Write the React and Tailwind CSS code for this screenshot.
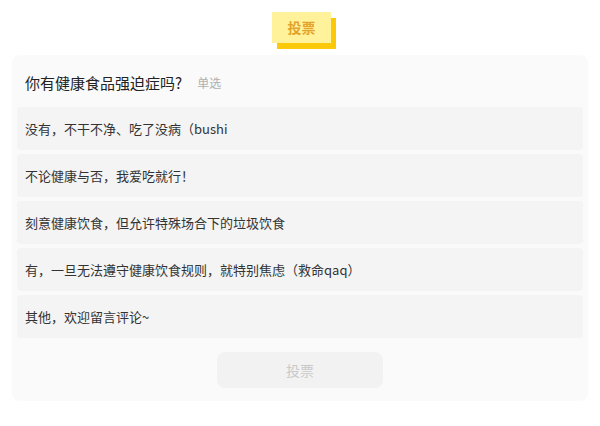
const options = [
  "没有，不干不净、吃了没病（bushi",
  "不论健康与否，我爱吃就行！",
  "刻意健康饮食，但允许特殊场合下的垃圾饮食",
  "有，一旦无法遵守健康饮食规则，就特别焦虑（救命qaq）",
  "其他，欢迎留言评论~",
];

export default function App() {
  return (
    <div
      className="min-h-[426px] bg-white"
      style={{ fontFamily: '"Noto Sans CJK SC", "Noto Sans", sans-serif' }}
    >
      {/* badge */}
      <div className="flex justify-center pt-[12px] pl-[3px]">
        <div className="w-[59px] h-[31px] bg-[#fff29a] shadow-[5px_6px_0_#fcc90a] flex items-center justify-center text-[14px] font-bold text-[#e3a42b]">
          投票
        </div>
      </div>

      {/* vote card */}
      <div className="mx-[12px] mt-[12px] rounded-lg bg-[#fafafa] px-[5px] pb-[13px]">
        <div className="flex items-center pl-[8px] pt-[17px] pb-[13px] leading-[22px]">
          <span className="text-[15px] text-[#222]">你有健康食品强迫症吗?</span>
          <span className="ml-[15px] text-[12px] text-[#b0b0b0]">单选</span>
        </div>

        <div className="flex flex-col gap-[4px]">
          {options.map((opt) => (
            <div
              key={opt}
              className="h-[43px] flex items-center pl-[8px] rounded bg-[#f4f4f4] text-[13px] text-[#333]"
            >
              {opt}
            </div>
          ))}
        </div>

        <button className="block mx-auto mt-[14px] w-[166px] h-[36px] rounded-lg bg-[#f2f2f2] text-[14px] text-[#c9c9c9]">
          投票
        </button>
      </div>
    </div>
  );
}
